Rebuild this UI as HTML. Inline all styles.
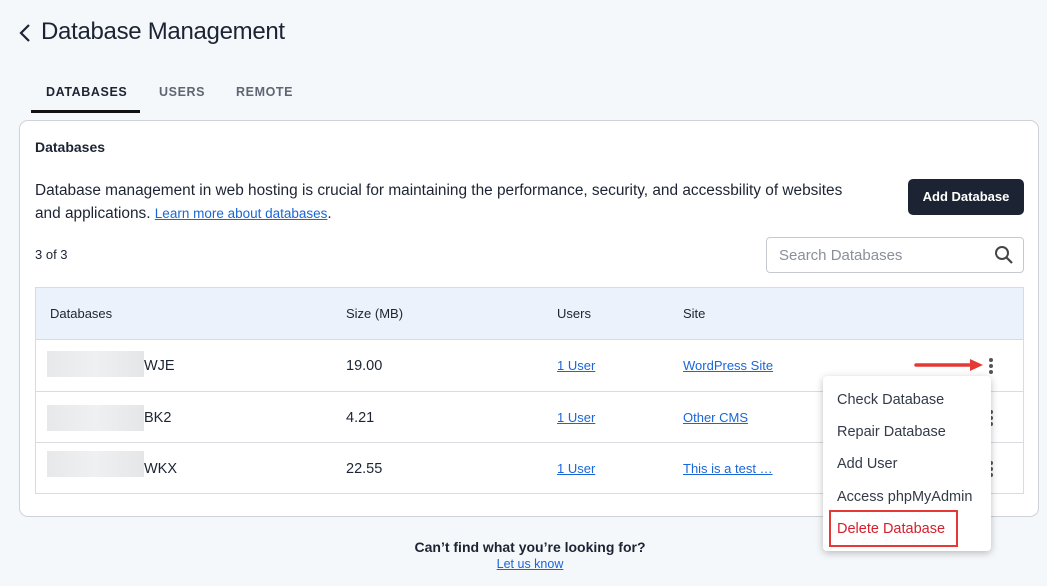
<html><head><style>
body{margin:0;width:1047px;height:586px;background:#f5f8fb;font-family:"Liberation Sans",sans-serif;color:#1c2433;position:relative;overflow:hidden}
.a{position:absolute;white-space:nowrap}
a,.l{color:#1a66d6;text-decoration:underline}
.blur{position:absolute;left:47px;width:97px;height:26px;background:linear-gradient(90deg,#e6e8ea,#eef0f1,#e4e6e8)}
.dots{position:absolute;left:989px;width:4px}
.dots i{display:block;width:4px;height:4px;border-radius:2px;background:#555;margin-bottom:2px}
</style></head><body>
<svg class="a" style="left:18px;top:23px" width="14" height="20"><path d="M11 2 L3 10 L11 18" stroke="#1c2433" stroke-width="2.2" fill="none"/></svg>
<div class="a" style="left:41px;top:18px;font-size:24px;letter-spacing:-0.3px">Database Management</div>
<div class="a" style="left:46px;top:85px;font-size:12.5px;font-weight:bold;letter-spacing:0.6px">DATABASES</div>
<div class="a" style="left:159px;top:85px;font-size:12.5px;font-weight:bold;letter-spacing:0.6px;color:#5e6673">USERS</div>
<div class="a" style="left:236px;top:85px;font-size:12.5px;font-weight:bold;letter-spacing:0.6px;color:#5e6673">REMOTE</div>
<div class="a" style="left:31px;top:110px;width:109px;height:3px;background:#111"></div>
<div class="a" style="left:19px;top:120px;width:1018px;height:395px;background:#fff;border:1px solid #cfd3d8;border-radius:9px"></div>
<div class="a" style="left:35px;top:139px;font-size:14px;font-weight:bold">Databases</div>
<div class="a" style="left:35px;top:179px;font-size:15.4px;line-height:23px">Database management in web hosting is crucial for maintaining the performance, security, and accessbility of websites<br>and applications. <span class="l" style="font-size:13.5px">Learn more about databases</span>.</div>
<div class="a" style="left:908px;top:179px;width:116px;height:36px;background:#1c2433;border-radius:5px;color:#fff;font-size:13px;font-weight:bold;text-align:center;line-height:36px">Add Database</div>
<div class="a" style="left:35px;top:247px;font-size:13px">3 of 3</div>
<div class="a" style="left:766px;top:237px;width:256px;height:34px;border:1px solid #c6cad0;border-radius:4px;background:#fff"></div>
<div class="a" style="left:779px;top:247px;font-size:15px;color:#8a9099">Search Databases</div>
<svg class="a" style="left:994px;top:245px" width="20" height="20"><circle cx="8" cy="8" r="6" stroke="#444" stroke-width="2" fill="none"/><path d="M12.5 12.5 L18 18" stroke="#444" stroke-width="2.2"/></svg>
<div class="a" style="left:35px;top:287px;width:987px;height:205px;border:1px solid #d8dce1"></div>
<div class="a" style="left:36px;top:288px;width:987px;height:51px;background:#ebf2fb;border-bottom:1px solid #d8dce1"></div>
<div class="a" style="left:50px;top:306px;font-size:13px">Databases</div>
<div class="a" style="left:346px;top:306px;font-size:13px">Size (MB)</div>
<div class="a" style="left:557px;top:306px;font-size:13px">Users</div>
<div class="a" style="left:683px;top:306px;font-size:13px">Site</div>
<div class="a" style="left:36px;top:391px;width:987px;height:1px;background:#d8dce1"></div>
<div class="a" style="left:36px;top:442px;width:987px;height:1px;background:#d8dce1"></div>
<div class="blur" style="top:351px"></div><div class="blur" style="top:405px"></div><div class="blur" style="top:451px"></div>
<div class="a" style="left:144px;top:358px;font-size:14.5px">WJE</div>
<div class="a" style="left:144px;top:410px;font-size:14.5px">BK2</div>
<div class="a" style="left:144px;top:461px;font-size:14.5px">WKX</div>
<div class="a" style="left:346px;top:358px;font-size:14.5px">19.00</div>
<div class="a" style="left:346px;top:410px;font-size:14.5px">4.21</div>
<div class="a" style="left:346px;top:461px;font-size:14.5px">22.55</div>
<div class="a l" style="left:557px;top:358px;font-size:13px">1 User</div>
<div class="a l" style="left:557px;top:410px;font-size:13px">1 User</div>
<div class="a l" style="left:557px;top:461px;font-size:13px">1 User</div>
<div class="a l" style="left:683px;top:358px;font-size:13px">WordPress Site</div>
<div class="a l" style="left:683px;top:410px;font-size:13px">Other CMS</div>
<div class="a l" style="left:683px;top:461px;font-size:13px">This is a test …</div>
<div class="dots" style="top:358px"><i></i><i></i><i></i></div>
<div class="dots" style="top:410px"><i></i><i></i><i></i></div>
<div class="dots" style="top:461px"><i></i><i></i><i></i></div>
<svg class="a" style="left:914px;top:358px" width="70" height="14"><path d="M2 7 L60 7" stroke="#e53935" stroke-width="3.5" stroke-linecap="round"/><path d="M56 1 L69 7 L56 13 Z" fill="#e53935"/></svg>
<div class="a" style="left:823px;top:376px;width:168px;height:175px;background:#fff;border-radius:4px;box-shadow:0 2px 8px rgba(0,0,0,.25)"></div>
<div class="a" style="left:837px;top:392px;font-size:14.5px;color:#333b48">Check Database</div>
<div class="a" style="left:837px;top:424px;font-size:14.5px;color:#333b48">Repair Database</div>
<div class="a" style="left:837px;top:456px;font-size:14.5px;color:#333b48">Add User</div>
<div class="a" style="left:837px;top:489px;font-size:14.5px;color:#333b48">Access phpMyAdmin</div>
<div class="a" style="left:829px;top:510px;width:125px;height:33px;border:2px solid #e53935"></div>
<div class="a" style="left:837px;top:521px;font-size:14.5px;color:#d4202c">Delete Database</div>
<div class="a" style="left:0;width:1060px;top:539px;text-align:center;font-size:14px;font-weight:bold">Can’t find what you’re looking for?</div>
<div class="a l" style="left:0;width:1060px;top:557px;text-align:center;font-size:12.5px">Let us know</div>
</body></html>
